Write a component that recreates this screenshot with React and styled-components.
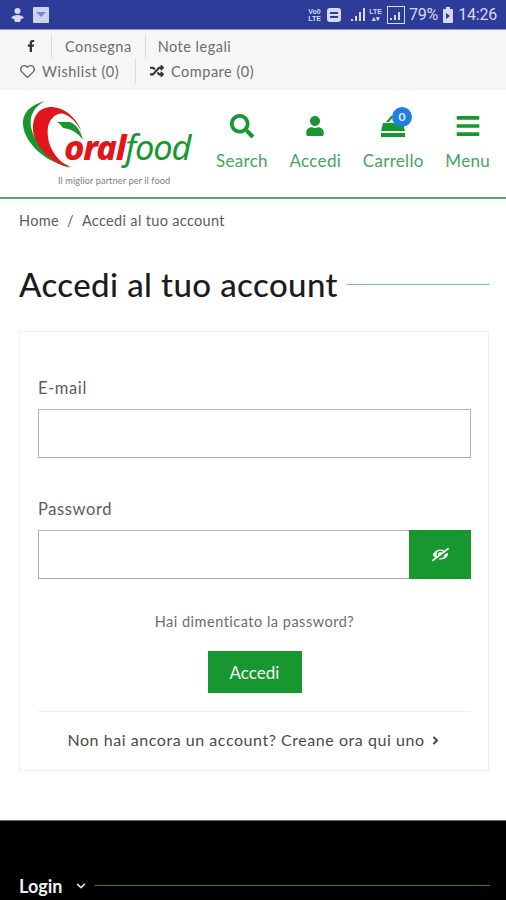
import React from "react";
import styled, { createGlobalStyle } from "styled-components";
import { FaFacebookF, FaSearch, FaUser, FaBars, FaRegHeart, FaRandom, FaAngleRight, FaChevronDown, FaEyeSlash } from "react-icons/fa";

const GlobalStyle = createGlobalStyle`
  html, body { margin: 0; padding: 0; background: #fff; }
  body { font-family: Lato, "Open Sans", "Liberation Sans", sans-serif; color: #333; overflow: hidden; }
  * { box-sizing: border-box; }
`;

const GREEN = "#18962f";

const Page = styled.div`
  width: 506px;
  height: 900px;
  display: flex;
  flex-direction: column;
  overflow: hidden;
`;

const StatusBar = styled.div`
  height: 30px;
  flex: none;
  background: #2d3b99;
  border-bottom: 1px solid #8f9bd0;
  display: flex;
  align-items: center;
  justify-content: space-between;
  padding: 0 9px 0 10px;
  color: #d5daf0;
`;

const StatusGroup = styled.div`
  display: flex;
  align-items: center;
  gap: ${(p) => p.$gap || 4}px;
`;

const StatusText = styled.span`
  font-family: Roboto, "Liberation Sans", sans-serif;
  font-size: 16px;
  letter-spacing: -0.2px;
`;

const TinyLabel = styled.span`
  font-family: "Liberation Sans", sans-serif;
  font-size: 7px;
  line-height: 7px;
  font-weight: 700;
  text-align: center;
  width: 15px;
`;

const DocIcon = styled.svg`
  margin-right: 4px;
`;

const TopBar = styled.div`
  height: 60px;
  flex: none;
  background: #f6f6f6;
  display: flex;
  flex-direction: column;
  padding: 4px 0 0 20px;
  color: #6c6c6c;
  font-size: 14.5px;
  letter-spacing: 0.5px;
`;

const TopRow = styled.div`
  display: flex;
  align-items: center;
  height: ${(p) => p.$h}px;
  padding-left: ${(p) => p.$indent || 0}px;
`;

const TopItem = styled.span`
  display: flex;
  align-items: center;
  gap: ${(p) => p.$gap || 6}px;
  white-space: nowrap;
  padding-right: ${(p) => p.$pr || 0}px;
  margin-right: ${(p) => p.$mr || 0}px;
  border-right: ${(p) => (p.$divider ? "1px solid #dcdcdc" : "none")};
  height: 100%;
  color: ${(p) => (p.$dark ? "#333" : "inherit")};
`;

const Header = styled.header`
  height: 109px;
  flex: none;
  background: #fff;
  border-bottom: 2px solid #58a76b;
  display: flex;
  align-items: flex-start;
  padding: 0 16px 0 22px;
`;

const Logo = styled.div`
  position: relative;
  width: 172px;
  height: 100px;
  flex: none;
  margin-top: 9px;
`;

const LogoMark = styled.svg`
  position: absolute;
  left: 0;
  top: 0;
`;

const LogoWord = styled.div`
  position: absolute;
  left: 42px;
  top: 26px;
  font-family: "Noto Sans", "Open Sans", sans-serif;
  font-style: italic;
  font-size: 34.5px;
  line-height: 44px;
  letter-spacing: -1.2px;
  white-space: nowrap;
  color: ${GREEN};
  font-weight: 400;
`;

const LogoRed = styled.span`
  color: #e2141c;
  font-weight: 800;
`;

const LogoTag = styled.div`
  position: absolute;
  left: 36px;
  top: 76px;
  font-size: 9.2px;
  letter-spacing: 0.1px;
  color: #808080;
  white-space: nowrap;
`;

const Nav = styled.nav`
  flex: 1;
  display: flex;
  justify-content: space-between;
  padding: 23px 0 0 22px;
`;

const NavItem = styled.div`
  display: flex;
  flex-direction: column;
  align-items: center;
  gap: 12px;
  color: #46a463;
  font-size: 17px;
  line-height: 20px;
  letter-spacing: 0.3px;
`;

const NavIcon = styled.div`
  position: relative;
  height: 26px;
  display: flex;
  align-items: center;
  justify-content: center;
  color: ${GREEN};
`;

const Badge = styled.span`
  position: absolute;
  top: -6px;
  right: -6px;
  width: 20px;
  height: 20px;
  border-radius: 50%;
  background: #1e7fe0;
  color: #e8f1fc;
  font-size: 12px;
  font-weight: 700;
  display: flex;
  align-items: center;
  justify-content: center;
`;

const Main = styled.main`
  flex: 1;
  padding: 13px 17px 0 19px;
  background: #fff;
`;

const Crumbs = styled.div`
  font-size: 14.5px;
  line-height: 18px;
  color: #5c5c5c;
  display: flex;
  gap: 8px;
  letter-spacing: 0.33px;
`;

const TitleRow = styled.div`
  display: flex;
  align-items: center;
  gap: 9px;
  margin-top: 34px;
  height: 40px;
`;

const Title = styled.h1`
  margin: 0;
  font-size: 33px;
  font-weight: 500;
  color: #1c1c1c;
  white-space: nowrap;
  letter-spacing: 0.4px;
`;

const Rule = styled.div`
  flex: 1;
  height: 1px;
  background: ${(p) => p.$color};
`;

const Card = styled.section`
  margin-top: 27px;
  height: 440px;
  border: 1px solid #f0f0f0;
  padding: 46px 17px 0 18px;
  display: flex;
  flex-direction: column;
`;

const Label = styled.label`
  margin-top: ${(p) => p.$mt || 0}px;
  font-size: 16.5px;
  line-height: 20px;
  color: #5c5c5c;
  letter-spacing: 0.6px;
`;

const InputBox = styled.div`
  display: flex;
  height: 49px;
  margin-top: ${(p) => p.$mt}px;
  border: 1px solid #b5b5b5;
  border-bottom-color: #a8a8a8;
  background: #fff;
`;

const EyeButton = styled.div`
  width: 62px;
  margin: -1px -1px -1px auto;
  background: ${GREEN};
  color: #eef7f0;
  display: flex;
  align-items: center;
  justify-content: center;
`;

const EyeIcon = styled(FaEyeSlash)`
  transform: scaleX(-1);
`;

const Forgot = styled.div`
  margin-top: 33px;
  text-align: center;
  font-size: 14.5px;
  line-height: 20px;
  color: #6c6c6c;
  letter-spacing: 0.5px;
`;

const Submit = styled.button`
  align-self: center;
  margin-top: 19px;
  width: 94px;
  height: 42px;
  border: none;
  background: ${GREEN};
  color: #f2f8f3;
  font-family: inherit;
  font-size: 17px;
`;

const Divider = styled.div`
  height: 1px;
  background: #efefef;
  margin-top: 18px;
`;

const Signup = styled.div`
  margin-top: 18px;
  display: flex;
  justify-content: center;
  align-items: center;
  gap: 4px;
  font-size: 16px;
  line-height: 20px;
  color: #4a4a4a;
  white-space: nowrap;
  letter-spacing: 0.55px;
`;

const Footer = styled.footer`
  height: 80px;
  flex: none;
  background: #000;
  border-top: 1px solid #666;
  display: flex;
  align-items: center;
  gap: 9px;
  padding: 50px 16px 0 19px;
`;

const FooterTitle = styled.span`
  font-size: 18px;
  font-weight: 700;
  color: #f0f0f0;
`;

const FooterChevron = styled(FaChevronDown)`
  margin-left: 5px;
  color: #ddd;
`;

const NetBars = () => (
  <svg width="17" height="16" viewBox="0 0 17 16" fill="currentColor">
    <rect x="1" y="12" width="2" height="2" />
    <rect x="5" y="9" width="2" height="5" />
    <rect x="9" y="5" width="2" height="9" />
    <rect x="13" y="1" width="2" height="13" />
  </svg>
);

export default function App() {
  return (
    <Page>
      <GlobalStyle />
      <StatusBar>
        <StatusGroup $gap={8}>
          <svg width="15" height="16" viewBox="0 0 15 16" fill="currentColor">
            <circle cx="7.5" cy="4" r="3" />
            <path d="M1 11c2-4 11-4 13 0l-3 1-1 3H5l-1-3z" />
          </svg>
          <svg width="16" height="16" viewBox="0 0 16 16">
            <rect width="16" height="16" rx="1" fill="#cfd4ee" />
            <path d="M3 5l5 5 5-5z" fill="#7c86c6" />
          </svg>
        </StatusGroup>
        <StatusGroup>
          <TinyLabel>Vo0<br />LTE</TinyLabel>
          <DocIcon width="16" height="16" viewBox="0 0 16 16">
            <rect x="1" y="1" width="14" height="14" rx="3" fill="#d5daf0" />
            <path d="M4 6h8M4 10h8" stroke="#2d3b99" strokeWidth="2" />
          </DocIcon>
          <StatusGroup $gap={1}>
            <NetBars />
            <TinyLabel>LTE<br />▴▾</TinyLabel>
          </StatusGroup>
          <svg width="18" height="18" viewBox="0 0 18 18" fill="none" stroke="currentColor">
            <rect x="0.5" y="0.5" width="17" height="17" />
            <path d="M4 14v-2M8 14v-5M12 14V6" strokeWidth="2" />
          </svg>
          <StatusText>79%</StatusText>
          <svg width="12" height="16" viewBox="0 0 12 16">
            <rect x="1" y="2" width="10" height="14" rx="1" fill="#d5daf0" />
            <rect x="4" y="0" width="4" height="2" fill="#d5daf0" />
            <path d="M4 6l4 3-4 3z" fill="#2d3b99" />
          </svg>
          <StatusText>14:26</StatusText>
        </StatusGroup>
      </StatusBar>

      <TopBar>
        <TopRow $h={24} $indent={5}>
          <TopItem $divider $pr={14} $mr={13} $dark><FaFacebookF size={12} /></TopItem>
          <TopItem $divider $pr={13} $mr={12}>Consegna</TopItem>
          <TopItem>Note legali</TopItem>
        </TopRow>
        <TopRow $h={26}>
          <TopItem $divider $gap={7} $pr={16} $mr={14}><FaRegHeart size={15} />Wishlist (0)</TopItem>
          <TopItem $gap={7}><FaRandom size={14} color="#333" />Compare (0)</TopItem>
        </TopRow>
      </TopBar>

      <Header>
        <Logo>
          <LogoMark width="64" height="72" viewBox="0 0 64 72">
            <path d="M23 2C8 6 0 14 1 26c2 19 24 39 49 42C30 60 12 45 9 28 7 16 13 7 23 2z" fill={GREEN} />
            <path d="M61 36C55 18 42 8 28 8 16 9 10 18 11 32c3 18 21 33 37 37-18-11-24-27-22-41 2-10 10-15 16-13 8 3 15 11 19 21z" fill="#e2141c" />
            <path d="M35 23h13c6 2 11 9 13 18-5-7-11-11-20-12-2-3-4-5-6-6z" fill={GREEN} />
          </LogoMark>
          <LogoWord><LogoRed>oral</LogoRed>food</LogoWord>
          <LogoTag>Il miglior partner per il food</LogoTag>
        </Logo>
        <Nav>
          <NavItem>
            <NavIcon><FaSearch size={24} /></NavIcon>
            Search
          </NavItem>
          <NavItem>
            <NavIcon><FaUser size={20} /></NavIcon>
            Accedi
          </NavItem>
          <NavItem>
            <NavIcon>
              <svg width="26" height="24" viewBox="0 0 26 24" fill="currentColor">
                <path d="M3 9h20l2 8H1zM1 19h24v4H1zM6 8l5-6h3L9 8z" />
              </svg>
              <Badge>0</Badge>
            </NavIcon>
            Carrello
          </NavItem>
          <NavItem>
            <NavIcon><FaBars size={26} /></NavIcon>
            Menu
          </NavItem>
        </Nav>
      </Header>

      <Main>
        <Crumbs>
          <span>Home</span><span>/</span><span>Accedi al tuo account</span>
        </Crumbs>
        <TitleRow>
          <Title>Accedi al tuo account</Title>
          <Rule $color="#7fc293" />
        </TitleRow>
        <Card>
          <Label>E-mail</Label>
          <InputBox $mt={11} />
          <Label $mt={41}>Password</Label>
          <InputBox $mt={11}>
            <EyeButton><EyeIcon size={17} /></EyeButton>
          </InputBox>
          <Forgot>Hai dimenticato la password?</Forgot>
          <Submit>Accedi</Submit>
          <Divider />
          <Signup>Non hai ancora un account? Creane ora qui uno <FaAngleRight size={13} /></Signup>
        </Card>
      </Main>

      <Footer>
        <FooterTitle>Login</FooterTitle>
        <FooterChevron size={10} />
        <Rule $color="#1d8a3a" />
      </Footer>
    </Page>
  );
}
